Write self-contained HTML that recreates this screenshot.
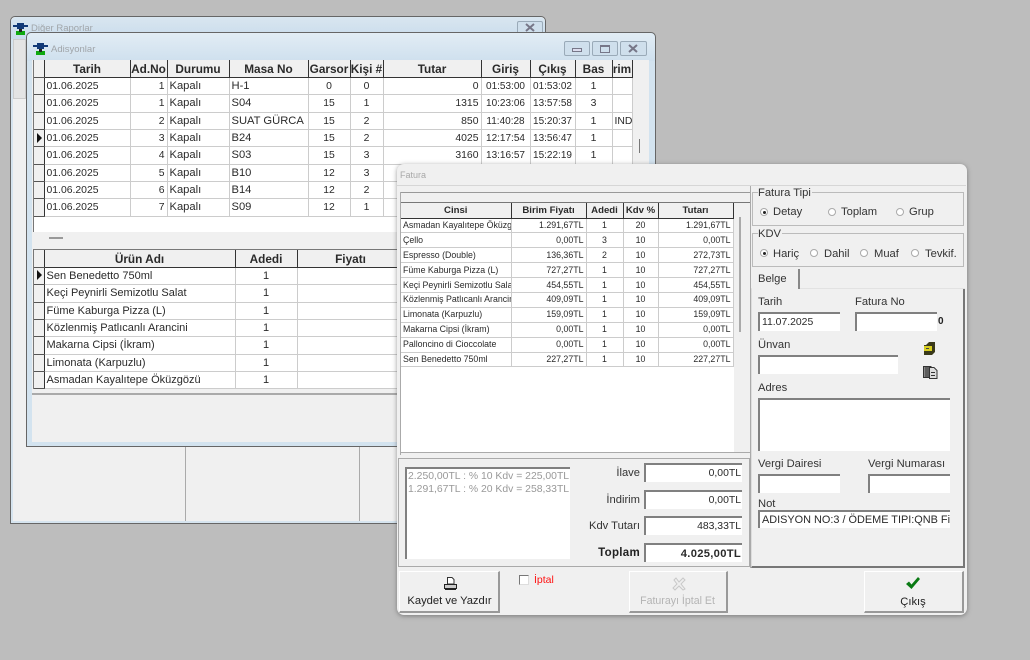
<!DOCTYPE html>
<html lang="tr"><head><meta charset="utf-8"><title>Fatura</title>
<style>
html,body{margin:0;padding:0;width:1030px;height:660px;overflow:hidden;background:#bdbdbd;font-family:"Liberation Sans",sans-serif;color:#2a2a2a}
div,span,table,svg{position:absolute;box-sizing:border-box}
td,th,td span{position:static}
.win{background:#f0f0f0;border:1px solid #666}
.t{white-space:nowrap;font-size:11px;line-height:13px}
table{border-collapse:collapse;table-layout:fixed;background:#fff}
th{background:#f0f0f0;font-weight:bold;text-align:center;padding:0;border-right:1px solid #333;border-bottom:1px solid #333;overflow:hidden;white-space:nowrap}
td{padding:0 2px;border-right:1px solid #ccc;border-bottom:1px solid #ccc;overflow:hidden;white-space:nowrap}
td.r{text-align:right}td.c{text-align:center}
td.i,th.i{background:#f0f0f0;border-right:1px solid #333;border-bottom:1px solid #555;padding:0}
td.x{font-size:11.2px}
td.n{font-size:10px}
#g1{left:34px;top:60px;width:598px;font-size:10.4px}
#g1 th{height:17px;font-size:11.8px}#g1 td{height:15.33px;line-height:15px;padding-top:1px}
#g2{left:34px;top:250px;width:370px;font-size:11px}
#g2 th{height:17px;font-size:11.8px}#g2 td{height:15.33px;line-height:15px;padding-top:1px}
#g3{left:401px;top:203px;width:332px;font-size:8.8px}
#g3 th{height:14.500px;font-size:9.6px}#g3 td{height:13.900px;line-height:13px;padding:0 2px}
.inp{background:#fff;border-top:2px solid #808080;border-left:2px solid #808080;font-size:10.4px;line-height:17px;padding-left:2px;white-space:nowrap;overflow:hidden}
.num{text-align:right;padding-right:1px;font-size:10.4px;line-height:18px}
.group{border:1px solid #bbb}
.lbl{font-size:11.2px;line-height:12px;white-space:nowrap;color:#333}
.rad{width:8px;height:8px;border-radius:50%;background:#fff;border:1px solid #aaa}
.rad.on:after{content:"";position:absolute;left:1.500px;top:1.500px;width:3px;height:3px;border-radius:50%;background:#222}
.btn{background:#f0f0f0;border-top:1px solid #fff;border-left:1px solid #fff;border-right:2px solid #999;border-bottom:2px solid #999;text-align:center;font-size:10.5px}
.wb{border:1px solid #9aaab8;border-radius:2px;background:#cfdfec}
</style></head><body>

<!-- Diğer Raporlar -->
<div class="win" style="left:10px;top:16px;width:536px;height:508px;border-radius:5px 5px 0 0">
 <div style="left:0;top:0;width:534px;height:22px;background:linear-gradient(#d9e6f0,#c9dcec);border-radius:5px 5px 0 0"></div>
 <div class="t" style="left:20px;top:5px;font-size:9.5px;color:#a0a5a9">Diğer Raporlar</div>
 <div class="wb" style="left:506px;top:4px;width:26px;height:14px"></div>
 <svg style="left:514px;top:6px" width="10" height="9" viewBox="0 0 10 9"><path d="M1 1 L9 8 M9 1 L1 8" stroke="#778" stroke-width="2" fill="none"/></svg>
 <div style="left:174px;top:430px;width:1px;height:75px;background:#aaa"></div>
 <div style="left:348px;top:430px;width:1px;height:75px;background:#aaa"></div>
 <div style="left:0;top:22px;width:534px;height:484px;border:2px solid #d6e4ef;border-top:0"></div>
 <div style="left:2px;top:22px;width:13px;height:60px;background:#e4e4e4;border:1px solid #ccc"></div>
</div>
<svg style="left:13px;top:23px" width="15" height="12" viewBox="0 0 15 12"><rect x="4" y="0" width="7" height="6" fill="#123a78"/><rect x="0" y="2" width="4" height="2" fill="#123a78"/><rect x="11" y="2" width="4" height="2" fill="#123a78"/><rect x="3" y="8" width="9" height="4" fill="#0fa80f"/><rect x="6" y="6" width="3" height="3" fill="#222"/></svg>

<!-- Adisyonlar -->
<div class="win" style="left:26px;top:32px;width:630px;height:415px;border-radius:5px 5px 0 0;background:#d3e3ef">
 <div style="left:0;top:0;width:628px;height:28px;background:linear-gradient(#e2edf5,#cfe0ee);border-radius:5px 5px 0 0"></div>
 <div class="t" style="left:24px;top:10px;font-size:9.5px;color:#a0a5a9">Adisyonlar</div>
 <div style="left:5px;top:27px;width:617px;height:382px;background:#f0f0f0"></div>
 <div class="wb" style="left:537px;top:8px;width:26px;height:15px"></div>
 <div class="wb" style="left:565px;top:8px;width:26px;height:15px"></div>
 <div class="wb" style="left:593px;top:8px;width:27px;height:15px"></div>
 <div style="left:545px;top:15px;width:10px;height:4px;border:1px solid #778;background:#dde"></div>
 <div style="left:573px;top:12px;width:10px;height:8px;border:1px solid #778;border-top-width:2px"></div>
 <svg style="left:601px;top:11px" width="10" height="9" viewBox="0 0 10 9"><path d="M1 1 L9 8 M9 1 L1 8" stroke="#778" stroke-width="2" fill="none"/></svg>
</div>
<svg style="left:33px;top:43px" width="15" height="12" viewBox="0 0 15 12"><rect x="4" y="0" width="7" height="6" fill="#123a78"/><rect x="0" y="2" width="4" height="2" fill="#123a78"/><rect x="11" y="2" width="4" height="2" fill="#123a78"/><rect x="3" y="8" width="9" height="4" fill="#0fa80f"/><rect x="6" y="6" width="3" height="3" fill="#222"/></svg>

<div style="left:33px;top:60px;width:600px;height:172px;background:#fff;border-left:1px solid #777;border-top:1px solid #777"></div>
<table id="g1">
<colgroup><col style="width:10px"><col style="width:86px"><col style="width:37px"><col style="width:62px"><col style="width:79px"><col style="width:42px"><col style="width:33px"><col style="width:98px"><col style="width:49px"><col style="width:45px"><col style="width:37px"><col style="width:20px"></colgroup>
<tr><th class="i"></th><th>Tarih</th><th>Ad.No</th><th>Durumu</th><th>Masa No</th><th>Garsor</th><th>Kişi #</th><th>Tutar</th><th>Giriş</th><th>Çıkış</th><th>Bas</th><th>rim</th></tr>
<tr><td class="i"></td><td>01.06.2025</td><td class="r">1</td><td class="x">Kapalı</td><td class="x">H-1</td><td class="c">0</td><td class="c">0</td><td class="r">0</td><td class="c n">01:53:00</td><td class="c n">01:53:02</td><td class="c">1</td><td></td></tr>
<tr><td class="i"></td><td>01.06.2025</td><td class="r">1</td><td class="x">Kapalı</td><td class="x">S04</td><td class="c">15</td><td class="c">1</td><td class="r">1315</td><td class="c n">10:23:06</td><td class="c n">13:57:58</td><td class="c">3</td><td></td></tr>
<tr><td class="i"></td><td>01.06.2025</td><td class="r">2</td><td class="x">Kapalı</td><td class="x">SUAT GÜRCA</td><td class="c">15</td><td class="c">2</td><td class="r">850</td><td class="c n">11:40:28</td><td class="c n">15:20:37</td><td class="c">1</td><td>IND</td></tr>
<tr><td class="i"></td><td>01.06.2025</td><td class="r">3</td><td class="x">Kapalı</td><td class="x">B24</td><td class="c">15</td><td class="c">2</td><td class="r">4025</td><td class="c n">12:17:54</td><td class="c n">13:56:47</td><td class="c">1</td><td></td></tr>
<tr><td class="i"></td><td>01.06.2025</td><td class="r">4</td><td class="x">Kapalı</td><td class="x">S03</td><td class="c">15</td><td class="c">3</td><td class="r">3160</td><td class="c n">13:16:57</td><td class="c n">15:22:19</td><td class="c">1</td><td></td></tr>
<tr><td class="i"></td><td>01.06.2025</td><td class="r">5</td><td class="x">Kapalı</td><td class="x">B10</td><td class="c">12</td><td class="c">3</td><td class="r"></td><td></td><td></td><td></td><td></td></tr>
<tr><td class="i"></td><td>01.06.2025</td><td class="r">6</td><td class="x">Kapalı</td><td class="x">B14</td><td class="c">12</td><td class="c">2</td><td class="r"></td><td></td><td></td><td></td><td></td></tr>
<tr><td class="i"></td><td>01.06.2025</td><td class="r">7</td><td class="x">Kapalı</td><td class="x">S09</td><td class="c">12</td><td class="c">1</td><td class="r"></td><td></td><td></td><td></td><td></td></tr>
</table>
<div style="left:37px;top:133px;width:0;height:0;border-left:5px solid #111;border-top:5px solid transparent;border-bottom:5px solid transparent"></div>
<div style="left:34px;top:232px;width:600px;height:16px;background:#f0f0f0"></div>
<div style="left:49px;top:237px;width:14px;height:2px;background:#999"></div>
<div style="left:639px;top:139px;width:1px;height:14px;background:#777"></div>

<div style="left:33px;top:249px;width:372px;height:140px;background:#fff;border-left:1px solid #777;border-top:1px solid #777"></div>
<table id="g2">
<colgroup><col style="width:10px"><col style="width:191px"><col style="width:62px"><col style="width:107px"></colgroup>
<tr><th class="i"></th><th>Ürün Adı</th><th>Adedi</th><th>Fiyatı</th></tr>
<tr><td class="i"></td><td>Sen Benedetto 750ml</td><td class="c">1</td><td></td></tr>
<tr><td class="i"></td><td>Keçi Peynirli Semizotlu Salat</td><td class="c">1</td><td></td></tr>
<tr><td class="i"></td><td>Füme Kaburga Pizza (L)</td><td class="c">1</td><td></td></tr>
<tr><td class="i"></td><td>Közlenmiş Patlıcanlı Arancini</td><td class="c">1</td><td></td></tr>
<tr><td class="i"></td><td>Makarna Cipsi (İkram)</td><td class="c">1</td><td></td></tr>
<tr><td class="i"></td><td>Limonata (Karpuzlu)</td><td class="c">1</td><td></td></tr>
<tr><td class="i"></td><td>Asmadan Kayalıtepe Öküzgözü</td><td class="c">1</td><td></td></tr>
</table>
<div style="left:37px;top:270px;width:0;height:0;border-left:5px solid #111;border-top:5px solid transparent;border-bottom:5px solid transparent"></div>
<div style="left:32px;top:393px;width:370px;height:2px;background:#aaa"></div>

<!-- Fatura -->
<div style="left:397px;top:164px;width:570px;height:451px;background:#f0f0f0;border-radius:7px;box-shadow:0 1px 5px rgba(70,70,70,.55)">
 <div class="t" style="left:3px;top:5px;font-size:9px;color:#a8a8a8">Fatura</div>
 <div style="left:0;top:21px;width:569px;height:1px;background:#d6d6d6"></div>
 <div style="left:3px;top:28px;width:351px;height:1px;background:#999"></div>
 <div style="left:3px;top:28px;width:1px;height:263px;background:#aaa"></div>
 <div style="left:353px;top:22px;width:1px;height:382px;background:#aaa"></div>
 <div style="left:4px;top:288px;width:349px;height:1px;background:#aaa"></div>
 <div style="left:1px;top:294px;width:352px;height:109px;border:1px solid #aaa"></div>
</div>
<div style="left:401px;top:203px;width:333px;height:249px;background:#fff"></div>
<div style="left:401px;top:202px;width:349px;height:1px;background:#777"></div>
<table id="g3">
<colgroup><col style="width:110px"><col style="width:75px"><col style="width:37px"><col style="width:35px"><col style="width:75px"></colgroup>
<tr><th>Cinsi</th><th>Birim Fiyatı</th><th>Adedi</th><th>Kdv %</th><th>Tutarı</th></tr>
<tr><td>Asmadan Kayalıtepe Öküzgözü</td><td class="r">1.291,67TL</td><td class="c">1</td><td class="c">20</td><td class="r">1.291,67TL</td></tr>
<tr><td>Çello</td><td class="r">0,00TL</td><td class="c">3</td><td class="c">10</td><td class="r">0,00TL</td></tr>
<tr><td>Espresso (Double)</td><td class="r">136,36TL</td><td class="c">2</td><td class="c">10</td><td class="r">272,73TL</td></tr>
<tr><td>Füme Kaburga Pizza (L)</td><td class="r">727,27TL</td><td class="c">1</td><td class="c">10</td><td class="r">727,27TL</td></tr>
<tr><td>Keçi Peynirli Semizotlu Salat</td><td class="r">454,55TL</td><td class="c">1</td><td class="c">10</td><td class="r">454,55TL</td></tr>
<tr><td>Közlenmiş Patlıcanlı Arancini</td><td class="r">409,09TL</td><td class="c">1</td><td class="c">10</td><td class="r">409,09TL</td></tr>
<tr><td>Limonata (Karpuzlu)</td><td class="r">159,09TL</td><td class="c">1</td><td class="c">10</td><td class="r">159,09TL</td></tr>
<tr><td>Makarna Cipsi (İkram)</td><td class="r">0,00TL</td><td class="c">1</td><td class="c">10</td><td class="r">0,00TL</td></tr>
<tr><td>Palloncino di Cioccolate</td><td class="r">0,00TL</td><td class="c">1</td><td class="c">10</td><td class="r">0,00TL</td></tr>
<tr><td>Sen Benedetto 750ml</td><td class="r">227,27TL</td><td class="c">1</td><td class="c">10</td><td class="r">227,27TL</td></tr>
</table>
<div style="left:739px;top:217px;width:2px;height:115px;background:#aaa"></div>

<!-- totals -->
<div class="inp" style="left:405px;top:467px;width:165px;height:92px;color:#999;font-size:10.4px;line-height:13px;padding:1px 0 0 1px">2.250,00TL : % 10 Kdv = 225,00TL<br>1.291,67TL : % 20 Kdv = 258,33TL</div>
<div class="lbl" style="left:610px;top:467px;width:30px;text-align:right">İlave</div>
<div class="lbl" style="left:600px;top:494px;width:40px;text-align:right">İndirim</div>
<div class="lbl" style="left:580px;top:520px;width:60px;text-align:right">Kdv Tutarı</div>
<div class="lbl" style="left:580px;top:547px;width:60px;text-align:right;font-weight:bold;font-size:11.5px;color:#222;letter-spacing:.3px">Toplam</div>
<div class="inp num" style="left:644px;top:463px;width:98px;height:19px">0,00TL</div>
<div class="inp num" style="left:644px;top:490px;width:98px;height:19px">0,00TL</div>
<div class="inp num" style="left:644px;top:516px;width:98px;height:19px">483,33TL</div>
<div class="inp num" style="left:644px;top:543px;width:98px;height:19px;font-weight:bold;font-size:11.2px;letter-spacing:.3px">4.025,00TL</div>

<!-- Fatura tipi -->
<div class="group" style="left:752px;top:192px;width:212px;height:34px"></div>
<div class="lbl" style="left:758px;top:187px;background:#f0f0f0;padding-right:1px">Fatura Tipi</div>
<div class="rad on" style="left:760px;top:208px"></div><div class="lbl" style="left:773px;top:206px">Detay</div>
<div class="rad" style="left:828px;top:208px"></div><div class="lbl" style="left:841px;top:206px">Toplam</div>
<div class="rad" style="left:896px;top:208px"></div><div class="lbl" style="left:909px;top:206px">Grup</div>
<div class="group" style="left:752px;top:233px;width:212px;height:34px"></div>
<div class="lbl" style="left:758px;top:228px;background:#f0f0f0;padding-right:1px">KDV</div>
<div class="rad on" style="left:760px;top:249px"></div><div class="lbl" style="left:773px;top:248px">Hariç</div>
<div class="rad" style="left:810px;top:249px"></div><div class="lbl" style="left:824px;top:248px">Dahil</div>
<div class="rad" style="left:860px;top:249px"></div><div class="lbl" style="left:874px;top:248px">Muaf</div>
<div class="rad" style="left:911px;top:249px"></div><div class="lbl" style="left:925px;top:248px">Tevkif.</div>

<!-- Belge tab -->
<div style="left:751px;top:288px;width:214px;height:280px;border-right:2px solid #777;border-bottom:2px solid #777;border-left:1px solid #ddd"></div>
<div style="left:751px;top:288px;width:214px;height:1px;background:#e2e2e2"></div>
<div style="left:752px;top:269px;width:48px;height:20px;background:#f0f0f0;border-right:2px solid #888"></div>
<div class="lbl" style="left:758px;top:273px">Belge</div>
<div class="lbl" style="left:758px;top:296px">Tarih</div>
<div class="lbl" style="left:855px;top:296px">Fatura No</div>
<div class="inp" style="left:758px;top:312px;width:82px;height:19px">11.07.2025</div>
<div class="inp" style="left:855px;top:312px;width:82px;height:19px"></div>
<div class="lbl" style="left:938px;top:316px;font-weight:bold;font-size:10px;color:#222">0</div>
<div class="lbl" style="left:758px;top:339px">Ünvan</div>
<div class="inp" style="left:758px;top:355px;width:140px;height:19px"></div>
<svg style="left:923px;top:341px" width="13" height="15" viewBox="0 0 13 15"><path d="M3 4 L6 1 H12 V11 L9 14 H1 V4 Z" fill="#3a3a1a"/><rect x="1" y="5" width="8" height="5" fill="#d8cf20"/><rect x="3" y="7" width="3" height="1" fill="#444"/></svg>
<svg style="left:923px;top:365px" width="15" height="14" viewBox="0 0 15 14"><path d="M0.500 1.500H5V12.500H0.500ZM3 1.500H8L8 12.500H3Z" fill="#888" stroke="#333"/><path d="M6.500 2.500H11L14 5.500V13.500H6.500Z" fill="#ddd" stroke="#333"/><rect x="8" y="7" width="4" height="1" fill="#333"/><rect x="8" y="10" width="4" height="1" fill="#333"/></svg>
<div class="lbl" style="left:758px;top:382px">Adres</div>
<div class="inp" style="left:758px;top:398px;width:192px;height:53px"></div>
<div class="lbl" style="left:758px;top:458px">Vergi Dairesi</div>
<div class="lbl" style="left:868px;top:458px">Vergi Numarası</div>
<div class="inp" style="left:758px;top:474px;width:82px;height:19px"></div>
<div class="inp" style="left:868px;top:474px;width:82px;height:19px"></div>
<div class="lbl" style="left:758px;top:498px">Not</div>
<div class="inp" style="left:758px;top:510px;width:192px;height:18px;font-size:10.9px">ADISYON NO:3 / ÖDEME TIPI:QNB Fi</div>

<!-- buttons -->
<div class="btn" style="left:399px;top:571px;width:101px;height:42px"></div>
<svg style="left:443px;top:576px" width="15" height="15" viewBox="0 0 15 15"><path d="M4.500 1.500H9L11 3.500V8H4.500Z" fill="#fff" stroke="#333"/><path d="M1.500 8.500H13.500V12.500H1.500Z" fill="#ccc" stroke="#222"/><rect x="2" y="12" width="11" height="2" fill="#222"/></svg>
<div class="lbl" style="left:400px;top:595px;width:99px;text-align:center;color:#222">Kaydet ve Yazdır</div>
<div style="left:519px;top:575px;width:10px;height:10px;background:#fff;border:1px solid #777;border-right-color:#ddd;border-bottom-color:#ddd"></div>
<div class="lbl" style="left:534px;top:574px;color:#f11;font-size:10.5px">İptal</div>
<div class="btn" style="left:629px;top:571px;width:99px;height:42px"></div>
<svg style="left:672px;top:577px" width="14" height="14" viewBox="0 0 14 14"><path d="M2 3 L4 1 L7 5 L11 1 L13 3 L9 7 L13 12 L11 13 L7 9 L3 13 L1 11 L5 7 Z" fill="#eee" stroke="#c8c8c8"/></svg>
<div class="lbl" style="left:629px;top:595px;width:97px;text-align:center;color:#b4b4b4;font-size:10.6px">Faturayı İptal Et</div>
<div class="btn" style="left:864px;top:571px;width:100px;height:42px"></div>
<svg style="left:905px;top:576px" width="16" height="14" viewBox="0 0 16 14"><path d="M1 8 L4 5.500 L6.500 8.500 L13 1 L15 3 L6.500 13 Z" fill="#0a7a14"/></svg>
<div class="lbl" style="left:864px;top:596px;width:98px;text-align:center;color:#222">Çıkış</div>
</body></html>
